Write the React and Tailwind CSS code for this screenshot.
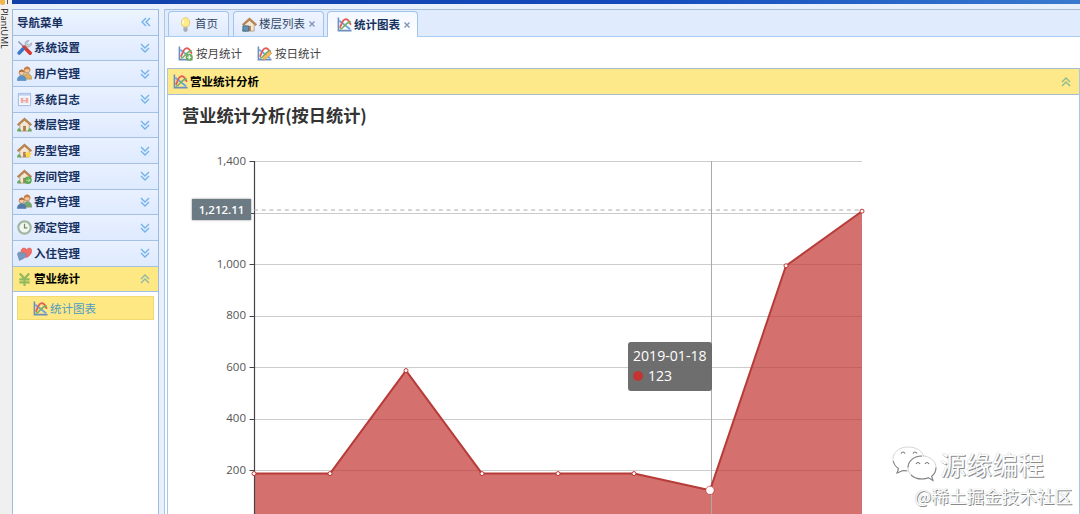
const uiFont = "font-['Open_Sans','Noto_Sans_CJK_SC',sans-serif]";

function Tools() {
  return (
    <>
      <path d="m5.500 10.500 5-5" stroke="#a9b4bf" strokeWidth="2.600" />
      <path d="M15.300 3 13 5.300l-2.200-.3-.3-2L12.800.700C9.500.200 7.800 3 9 6l1.200 1.200C13 8.200 16 6.500 15.300 3Z" fill="#cfd6dc" stroke="#8995a1" strokeWidth=".7" />
      <path d="m1.500 1.500 6 6" stroke="#8d97a3" strokeWidth="1.600" />
      <path d="m7.500 7.500 6.500 6.500" stroke="#d83a35" strokeWidth="3.800" strokeLinecap="round" />
      <path d="m2.300 13.900 4-4.200" stroke="#3a78ca" strokeWidth="3.800" strokeLinecap="round" />
    </>
  );
}

function People({ colors = ["#dfb060", "#5a94cf"] }) {
  return (
    <>
      <circle cx="10.800" cy="4.300" r="3.100" fill="#f1c79c" stroke="#b98050" strokeWidth=".8" />
      <path d="M7.300 4.300c0-5 7-5 7 0-2-.4-3-1.800-7 0Z" fill="#c98044" />
      <path d="M6.500 14c0-8 9.300-8 9.300 0Z" fill={colors[0]} stroke="#a58a5d" strokeWidth=".6" />
      <circle cx="5" cy="7.300" r="2.800" fill="#f3c9a0" stroke="#b98050" strokeWidth=".8" />
      <path d="M2 7c0-4.200 6-4.200 6 0-2-.6-3-1.300-6 0Z" fill="#b86c38" />
      <path d="M.300 15.500c0-7 9.400-7 9.400 0Z" fill={colors[1]} stroke="#4b7aa8" strokeWidth=".6" />
    </>
  );
}

function Calendar() {
  return (
    <>
      <path d="M1.500 1.500h13v13h-13Z" fill="#f5f8fd" stroke="#9db6de" />
      <path d="M2 2h12v2H2Z" fill="#c3d3ef" />
      <path d="M4 6.500h8M4 9h8M4 11.500h8" stroke="#d2dceb" />
      <path d="M4 6.500h2.500v5H4ZM9.500 6.500H12v5H9.500ZM6 8.500h4v1.500H6Z" fill="#f4a6a0" />
    </>
  );
}

function House({ badge }) {
  return (
    <>
      <path d="M3 7.500 8 3l5 4.500V15H3Z" fill="#f3e8d3" stroke="#a99074" strokeWidth=".8" />
      <path d="M.700 8.800 8 2.200l7.300 6.600" fill="none" stroke="#b98452" strokeWidth="2.500" />
      <path d="M6.500 9.500h3V15h-3Z" fill="#b17c52" />
      <path d="M.200 14c1-2.800 2.800-2.800 4 0v1.500h-4Z" fill="#6cab5f" />
      {!badge && <path d="M11.800 14c1-2.800 2.800-2.800 4 0v1.500h-4Z" fill="#6cab5f" />}
      {badge === "star" && <path d="m12 8 1.300 2.500 2.700.4-2 2 .5 2.700-2.500-1.300-2.500 1.300.5-2.700-2-2 2.700-.4Z" fill="#ffd546" />}
      {badge === "go" && <><circle cx="11.800" cy="12" r="3.900" fill="#5aa84f" /><path d="M9.800 12h4M12 10l2 2-2 2" stroke="#bfe6b4" fill="none" /></>}
      {badge === "stack" && <path d="M1 9.500h6V15H1Z" fill="#6590b7" stroke="#466f95" />}
    </>
  );
}

function Clock() {
  return (
    <>
      <circle cx="8" cy="8" r="6.600" fill="#f1f6ef" stroke="#a0b8a2" strokeWidth="2.300" />
      <path d="M8 4v4.300h3" fill="none" stroke="#6e8c6d" strokeWidth="1.300" />
    </>
  );
}

function Hearts() {
  return (
    <>
      <path d="M10 12.500C2.500 8.500 3.500 2.500 7 2.200c2.200-.3 3.300 1.600 3.300 1.600s2-2.500 4.200-1.300C17.800 5 14.500 10.500 10 12.500Z" fill="#f2706a" stroke="#d8504d" strokeWidth=".5" />
      <path d="M2.500 15.500.500 8.800C1 5.500 4.500 5.800 5.300 8c1.700-1.500 4.500-.5 4.500 1.900 0 2.600-3.800 4.100-7.300 5.600Z" fill="#7898bd" stroke="#5f80a5" strokeWidth=".5" />
    </>
  );
}

function Yen() {
  return <path d="m3 1.500 5 5.500 5-5.500M8 7v8M2.500 7.800h11M2.500 11h11" fill="none" stroke="#93b95e" strokeWidth="2.300" />;
}

function Chart({ badge }) {
  return (
    <>
      <path d="M1.500.500v14h14" fill="none" stroke="#6e8fbd" strokeWidth="1.700" />
      <path d="m2.500 4 11.500 9" stroke="#6aa5e3" strokeWidth="1.900" />
      <path d="M3 11.500C5 8 5.500 2.500 9.500 2.300c3 0 3.300 3.200 5.300 6" fill="none" stroke="#e55a55" strokeWidth="1.900" />
      <path d="M3 13C8 12.500 7 6.500 14.800 5" fill="none" stroke="#78b066" strokeWidth="1.700" />
      {badge === "add" && <><circle cx="12" cy="12" r="3.800" fill="#68ab5a" /><path d="M9.900 12h4.200M12 9.900v4.200" stroke="#fff" strokeWidth="1.300" /></>}
      {badge === "edit" && <path d="m6.500 15 .8-3.500 6-6 2.400 2.300-6 6Z" fill="#f6bd5c" stroke="#cf923e" strokeWidth=".6" />}
    </>
  );
}

function Bulb() {
  return (
    <>
      <path d="M5.500 10.500C1.500 6.500 4 .700 8 .700s6.500 5.800 2.500 9.800Z" fill="#ffea8c" stroke="#d9bd63" strokeWidth=".8" />
      <path d="M6.500 3.300c-1.500 1-1.300 3-.8 4" stroke="#fffbe0" strokeWidth="1.400" fill="none" />
      <path d="M5.800 11h4.400v3.300l-1 1.500H6.800l-1-1.500Z" fill="#a7aeb5" />
    </>
  );
}

function Icon({ children }) {
  return <svg viewBox="0 0 16 16" className="size-[15px] shrink-0">{children}</svg>;
}

function Chevrons({ dir = "down", className = "text-[#72b3eb]" }) {
  const paths = {
    down: "m1 1 4 4 4-4M1 5l4 4 4-4",
    up: "m1 5 4-4 4 4M1 9l4-4 4 4",
    left: "M5 1 1 5l4 4M9 1 5 5l4 4",
  };
  return (
    <svg viewBox="0 0 10 10" className={`size-[10px] shrink-0 ${className}`}>
      <path d={paths[dir]} fill="none" stroke="currentColor" strokeWidth="1.400" />
    </svg>
  );
}

const menu = [
  { label: "系统设置", icon: <Tools /> },
  { label: "用户管理", icon: <People /> },
  { label: "系统日志", icon: <Calendar /> },
  { label: "楼层管理", icon: <House /> },
  { label: "房型管理", icon: <House badge="star" /> },
  { label: "房间管理", icon: <House badge="go" /> },
  { label: "客户管理", icon: <People colors={["#6cab74", "#5679ab"]} /> },
  { label: "预定管理", icon: <Clock /> },
  { label: "入住管理", icon: <Hearts /> },
  { label: "营业统计", icon: <Yen />, open: true },
];

function Sidebar() {
  return (
    <aside className="w-[147px] shrink-0 border border-b-0 border-[#9dbbe0] bg-white">
      <div className="flex h-[25.500px] items-center justify-between border-b border-[#a4c0e2] bg-linear-to-b from-[#edf4ff] to-[#e0ebff] pr-[7px] pl-1 text-[11.500px] font-bold text-[#17315f]">
        导航菜单
        <Chevrons dir="left" />
      </div>
      {menu.map((item) => (
        <div
          key={item.label}
          className={`flex h-[25.700px] items-center border-b border-[#a4c0e2] pr-2 pl-1 text-[11.500px] font-bold ${
            item.open ? "bg-[#fde883] text-black" : "bg-linear-to-b from-[#e9f1ff] to-[#deeaff] text-[#17315f]"
          }`}
        >
          <Icon>{item.icon}</Icon>
          <span className="ml-[2px] flex-1">{item.label}</span>
          <Chevrons dir={item.open ? "up" : "down"} className={item.open ? "text-[#8fb9a9]" : "text-[#72b3eb]"} />
        </div>
      ))}
      <div className="mx-1 mt-1 flex h-6 items-center border border-[#f3da70] bg-[#fde883] pl-[15px] text-[11.500px] text-[#4f9bc4]">
        <Icon><Chart /></Icon>
        <span className="ml-[2px]">统计图表</span>
      </div>
    </aside>
  );
}

function Tabs() {
  return (
    <div className="flex h-[28px] items-end gap-1 border-y border-t-[#a5bedb] border-b-[#a9cdf2] bg-[#e0ebfd] pl-[3px] text-[11.500px] text-[#334766]">
      <div className="flex h-[25px] w-[61px] items-center rounded-t border border-b-0 border-[#a4c3e8] bg-linear-to-b from-[#eff5ff] to-[#e0ebff] pl-[9px]">
        <Icon><Bulb /></Icon>
        <span className="ml-[2px]">首页</span>
      </div>
      <div className="flex h-[25px] w-[91px] items-center rounded-t border border-b-0 border-[#a4c3e8] bg-linear-to-b from-[#eff5ff] to-[#e0ebff] pl-2">
        <Icon><House badge="stack" /></Icon>
        <span className="ml-[2px]">楼层列表</span>
        <Close />
      </div>
      <div className="-mb-px -ml-px flex h-[26px] w-[91px] items-center rounded-t border border-b-0 border-[#a4c3e8] bg-linear-to-b from-[#f2f7ff] to-white pl-[9px] font-bold text-[#17315f]">
        <Icon><Chart /></Icon>
        <span className="ml-[2px]">统计图表</span>
        <Close />
      </div>
    </div>
  );
}

function Close() {
  return (
    <svg viewBox="0 0 6 6" className="ml-1 size-[6px]">
      <path d="m.500.500 5 5M5.500.500l-5 5" stroke="#8294b5" strokeWidth="1.400" />
    </svg>
  );
}

const ticks = [200, 400, 600, 800, 1000, 1200, 1400];
const data = [188, 188, 588, 188, 188, 188, 123, 995, 1207];
const xAt = (i) => 86 + i * 76;
const yAt = (v) => 66.500 + (1400 - v) * 0.2575;

function LineChart() {
  const line = data.map((v, i) => `${xAt(i)},${yAt(v)}`).join(" ");
  return (
    <div className="relative h-[419px]">
      <svg width="911" height="419" className={`block ${uiFont}`}>
        {ticks.map((t) => (
          <path key={t} d={`M86 ${Math.floor(yAt(t)) + 0.5}H694`} stroke="#cccccc" />
        ))}
        <polygon points={`86,419 ${line} 694,419`} fill="#c23531" fillOpacity=".7" />
        {ticks.map((t) => (
          <g key={t}>
            <path d={`M81.500 ${Math.floor(yAt(t)) + 0.5}H86`} stroke="#444" />
            {t !== 1200 && (
              <text x="78" y={yAt(t) + 3} textAnchor="end" fontSize="11.500" fill="#555">
                {t.toLocaleString("en-US")}
              </text>
            )}
          </g>
        ))}
        <path d="M86.500 66v353" stroke="#444" strokeWidth="1.200" />
        <path d="M86 115H694" stroke="#aaa" strokeDasharray="4 3.700" />
        <path d="M543.500 66v353" stroke="#aaa" />
        <polyline points={line} fill="none" stroke="#b73b38" strokeWidth="2" strokeLinejoin="round" />
        {data.map((v, i) => (
          <circle key={i} cx={xAt(i)} cy={yAt(v)} r={i === 6 ? 4.2 : 2} fill="#fff" stroke="#c23531" strokeWidth={i === 6 ? 0.7 : 1} />
        ))}
      </svg>
      <h1 className="absolute top-[8px] left-[14px] font-['Noto_Sans_CJK_SC',sans-serif] text-[17.200px] leading-6 font-bold whitespace-nowrap text-[#333]">
        营业统计分析(按日统计)
      </h1>
      <div className="absolute top-[104px] left-6 flex h-[21px] w-[59px] items-center justify-center bg-[#6b7a83] text-[11.500px] font-semibold text-white shadow-[0_0_2px_#888]">
        1,212.11
      </div>
      <div className="absolute top-[247px] left-[460px] h-[49px] w-[84px] rounded-[3px] bg-[#666]/95 pt-[4px] pl-[5px] text-[14.100px] leading-5 whitespace-nowrap text-white">
        <div>2019-01-18</div>
        <div className="flex items-center gap-[5px]">
          <i className="size-[10px] rounded-full bg-[#c23531]" />
          123
        </div>
      </div>
    </div>
  );
}

function Watermark() {
  return (
    <div className="absolute right-[8px] bottom-[4px] flex flex-col items-end font-['Noto_Sans_CJK_SC',sans-serif] whitespace-nowrap text-white [text-shadow:1px_1px_0_#8a8a8a,0_0_1px_#aaa]">
      <div className="mr-7 flex h-9 items-center gap-[3px]">
        <svg viewBox="0 0 46 38" className="h-[38px] w-[46px]" fill="#fff" stroke="#bbb" strokeWidth=".6">
          <path d="M17 2C8 2 2 7.500 2 14c0 4 2 7 5.500 9.500L6 28l6-2.500c10 2 21-2 21-12C33 7 26 2 17 2Z" />
          <path d="M31 11c-8 0-14 5-14 11.500S23 34 31 34c2.500 0 4.500-.3 6.500-1.200L42 35.500l-1.300-4.300C43.500 29 45 26 45 22.500 45 16 39 11 31 11Z" />
          <path d="M2.300 16c.5 3 2.200 5.500 5.200 7.500L6 28l6-2.500 4 .3M17 22.500c0-6.500 6-11.500 14-11.500M20 30c2.500 2.500 6.500 4 11 4 2.500 0 4.500-.3 6.500-1.200L42 35.500l-1.300-4.300C43.500 29 45 26 45 22.500" fill="none" stroke="#858585" strokeWidth="1.100" />
          <path d="M10 8.500q2-3 4 0M22 8.500q2-3 4 0M25 19q2-3 4 0M34 19q2-3 4 0" fill="none" stroke="#777" strokeWidth="1.200" />
        </svg>
        <span className="text-[26px] leading-9">源缘编程</span>
      </div>
      <div className="text-[17.600px] leading-7">@稀土掘金技术社区</div>
    </div>
  );
}

export default function App() {
  return (
    <div className={`relative flex h-[514px] w-[1080px] flex-col overflow-hidden bg-[#e7f0fb] ${uiFont}`}>
      <div className="flex min-h-0 flex-1">
        <div className="w-3 shrink-0 bg-[#f1f0f0]">
          <div className="flex h-[8px] items-start gap-[2px]">
            <span className="h-[5px] w-[5px] rounded-b bg-[#efb64e]" />
            <span className="h-[4px] w-px bg-[#555]" />
          </div>
          <div className="h-[42px] w-[9px] text-[9px] leading-[9px] whitespace-nowrap text-[#222] [writing-mode:vertical-rl]">
            PlantUML
          </div>
        </div>
        <div className="flex min-w-0 flex-1 flex-col">
          <div className="h-1 shrink-0 bg-linear-to-r from-[#1140a8] via-[#154bbd] via-60% to-[#397ad0]" />
          <div className="flex min-h-0 flex-1 pt-[5px]">
            <Sidebar />
            <main className="ml-[5px] min-w-0 flex-1 border-l border-[#a9c7e8] bg-white">
              <Tabs />
              <div className="flex h-[31px] items-center pt-[2px] pl-[13px] text-[11.500px] text-[#444]">
                <Icon><Chart badge="add" /></Icon>
                <span className="mr-[15px] ml-[3px]">按月统计</span>
                <Icon><Chart badge="edit" /></Icon>
                <span className="ml-[3px]">按日统计</span>
              </div>
              <section className="ml-[2px] border-x border-[#a9c7e8]">
                <div className="flex h-[27px] items-center border-y border-[#a7bdcf] bg-[#fde98a] pr-2 pl-[5px] text-[11.500px] font-bold text-black">
                  <Icon><Chart /></Icon>
                  <span className="ml-[2px] flex-1">营业统计分析</span>
                  <Chevrons dir="up" className="text-[#8fb98d]" />
                </div>
                <LineChart />
              </section>
            </main>
          </div>
        </div>
      </div>
      <Watermark />
    </div>
  );
}
